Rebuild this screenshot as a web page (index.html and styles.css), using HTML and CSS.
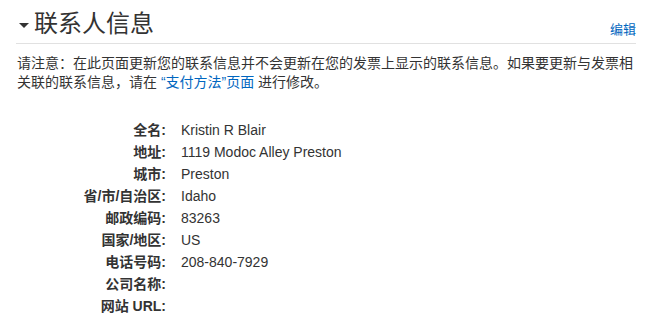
FILE: index.html
```html
<!DOCTYPE html>
<html lang="zh-CN">
<head>
<meta charset="utf-8">
<title>联系人信息</title>
<link rel="stylesheet" href="styles.css">
</head>
<body>
<section class="panel">
  <header class="panel-head">
    <h1 class="panel-title"><span class="caret"></span>联系人信息</h1>
    <a class="edit-link" href="#">编辑</a>
  </header>
  <p class="notice">请注意：在此页面更新您的联系信息并不会更新在您的发票上显示的联系信息。如果要更新与发票相关联的联系信息，请在 <a class="inline-link" href="#">“支付方法”页面</a> 进行修改。</p>
  <dl class="info">
    <dt>全名:</dt><dd>Kristin R Blair</dd>
    <dt>地址:</dt><dd>1119 Modoc Alley Preston</dd>
    <dt>城市:</dt><dd>Preston</dd>
    <dt>省/市/自治区:</dt><dd>Idaho</dd>
    <dt>邮政编码:</dt><dd>83263</dd>
    <dt>国家/地区:</dt><dd>US</dd>
    <dt>电话号码:</dt><dd>208-840-7929</dd>
    <dt>公司名称:</dt><dd></dd>
    <dt>网站 URL:</dt><dd></dd>
  </dl>
</section>
</body>
</html>
```

FILE: styles.css
```css
html, body {
  margin: 0;
  padding: 0;
  background: #ffffff;
}
body {
  font-family: "Liberation Sans", "Noto Sans CJK SC", sans-serif;
  color: #333333;
  font-size: 14px;
}
.panel {
  width: 620px;
  margin-left: 16px;
  padding-top: 8px;
}
.panel-head {
  display: flex;
  justify-content: space-between;
  align-items: flex-end;
  border-bottom: 1px solid #e1e1e1;
  padding-bottom: 3px;
}
.panel-title {
  margin: 0;
  font-size: 24px;
  font-weight: normal;
  line-height: 32px;
  color: #333333;
  display: flex;
  align-items: center;
}
.caret {
  display: inline-block;
  width: 0;
  height: 0;
  border-left: 5px solid transparent;
  border-right: 5px solid transparent;
  border-top: 5px solid #333333;
  margin: 3px 5px 0 3px;
}
.edit-link {
  font-size: 13px;
  line-height: 18px;
  color: #0066c0;
  text-decoration: none;
  margin-bottom: 1px;
}
.notice {
  margin: 10px 0 0 1px;
  line-height: 19px;
  font-size: 14px;
}
.inline-link {
  color: #0066c0;
  text-decoration: none;
}
.info {
  display: grid;
  grid-template-columns: 150px 1fr;
  column-gap: 15px;
  margin: 27px 0 0 0;
  line-height: 22px;
}
.info dt {
  text-align: right;
  font-weight: bold;
}
.info dd {
  margin: 0;
  min-height: 22px;
}
```
